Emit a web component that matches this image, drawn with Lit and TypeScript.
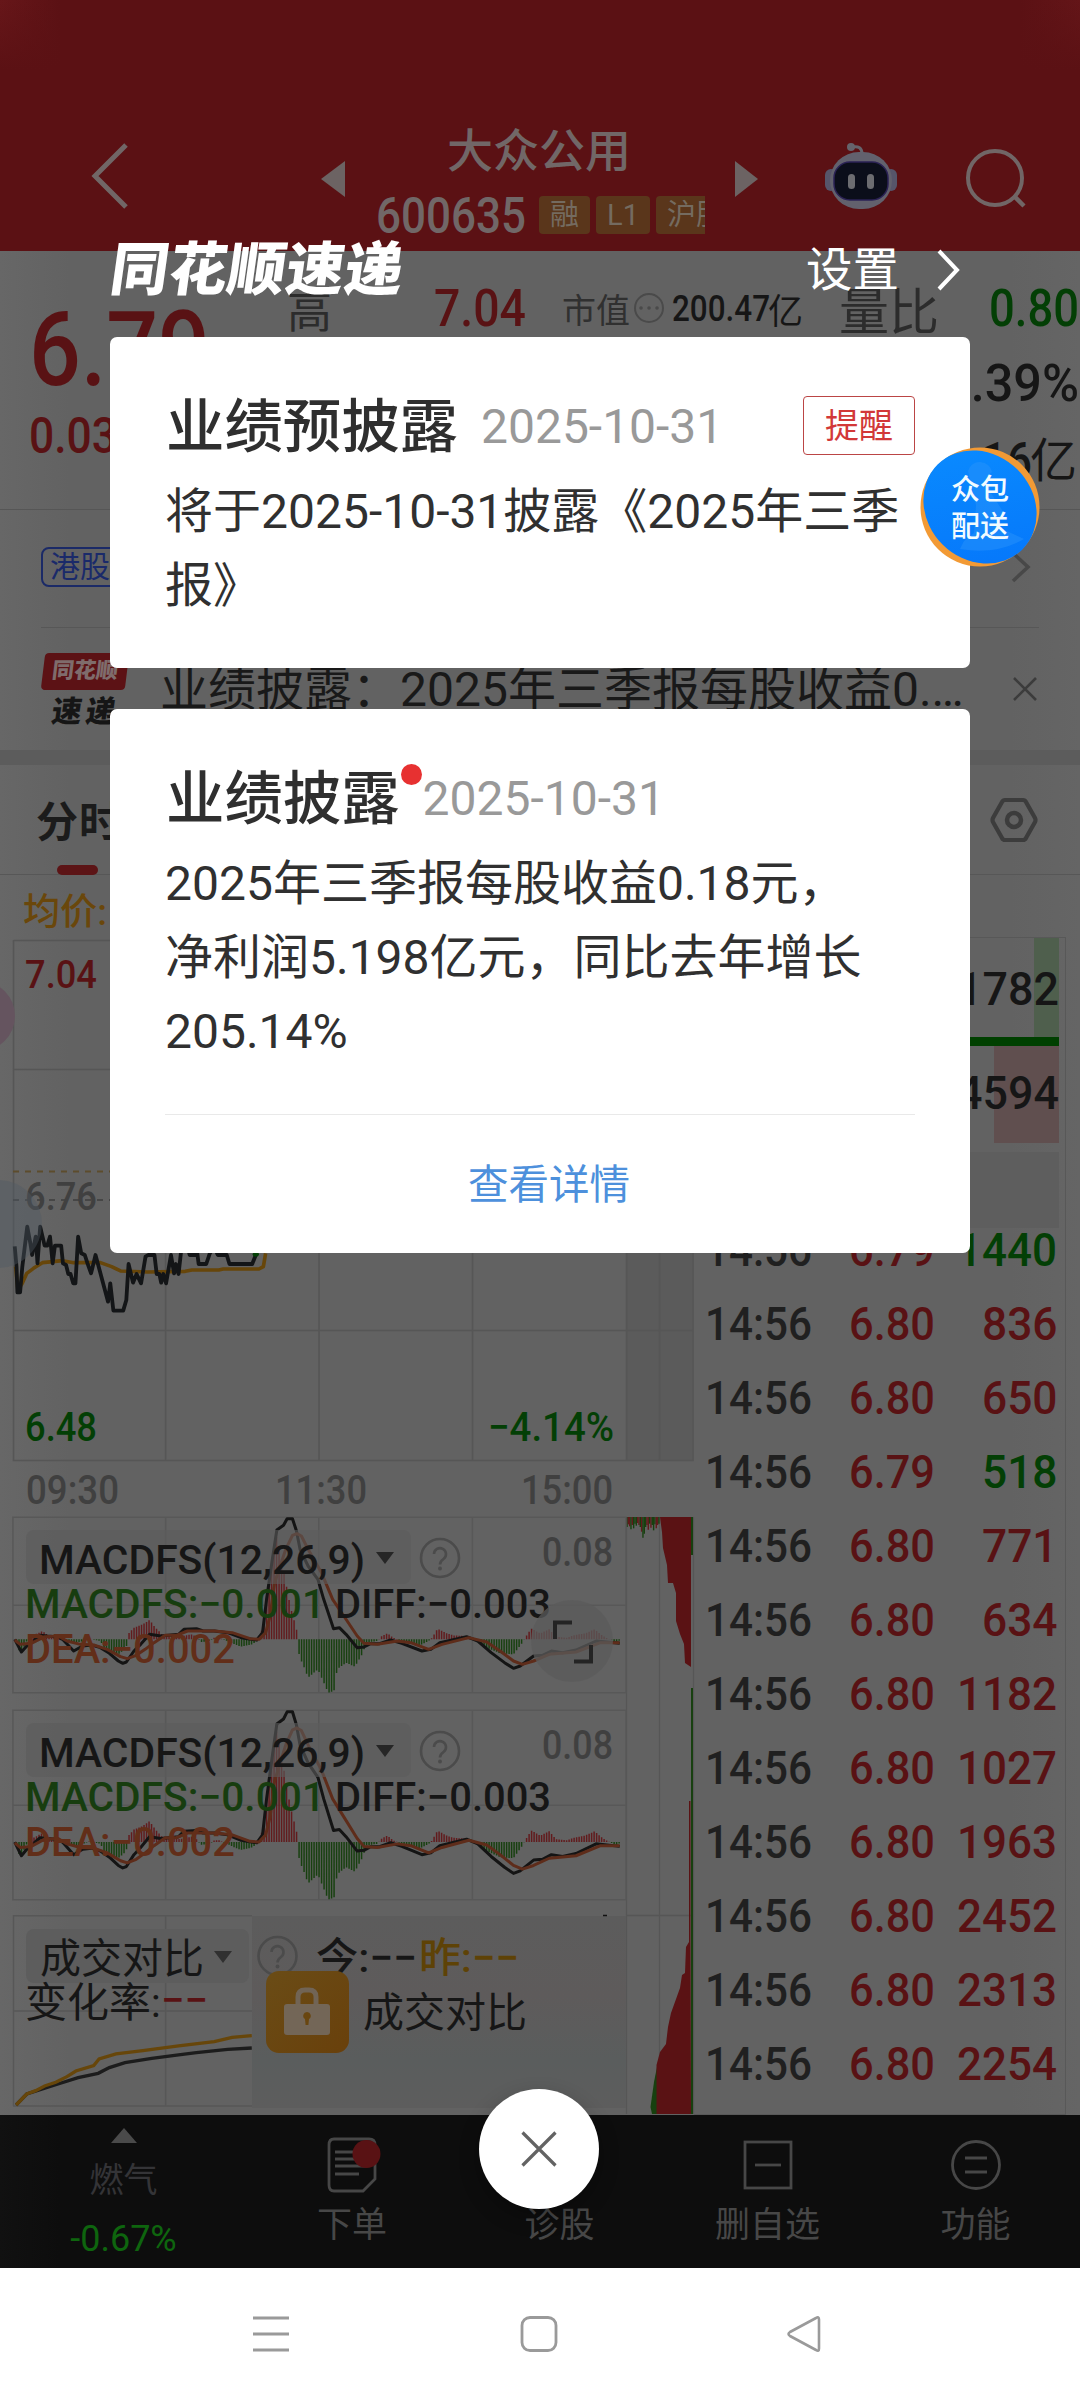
import { LitElement, html, svg, css } from "lit";
import { customElement } from "lit/decorators.js";

/** Condensed numeric label, fitted to a given width. */
const num = (text: string, width: number, size: number, fill: string, weight = 500) => html`<svg
  class="num" width=${width} height=${Math.round(size * 0.72)}>
  <text x="-2" y=${Math.round(size * 0.715)} font-size=${size} font-weight=${weight} fill=${fill}
    textLength=${width + 4} lengthAdjust="spacingAndGlyphs">${text}</text></svg>`;

const label = (x: number, y: number, width: number, size: number, fill: string, text: string, weight = 500) => svg`<text
  x=${x - 2} y=${y} font-size=${size} font-weight=${weight} fill=${fill} textLength=${width + 4}
  lengthAdjust="spacingAndGlyphs">${text}</text>`;

const RED = "#591214";
const GREEN = "#033f05";
const INK = "#161616";
const DIM = "#404040";

const TRADES: [string, string, string, boolean][] = [
  ["14:56", "6.79", "1440", false],
  ["14:56", "6.80", "836", true],
  ["14:56", "6.80", "650", true],
  ["14:56", "6.79", "518", false],
  ["14:56", "6.80", "771", true],
  ["14:56", "6.80", "634", true],
  ["14:56", "6.80", "1182", true],
  ["14:56", "6.80", "1027", true],
  ["14:56", "6.80", "1963", true],
  ["14:56", "6.80", "2452", true],
  ["14:56", "6.80", "2313", true],
  ["14:56", "6.80", "2254", true],
];

const HIST: number[][] = [
  [37, -5], [45, -45], [60, -5], [75, 12], [95, 25], [115, 5], [140, 3], [150, -10], [180, -8], [200, 2], [225, -5],
  [235, -30], [265, -45], [283, -25], [286, 15], [300, 35], [320, 45], [335, 58], [348, 35], [365, 12], [400, 8],
  [430, 15], [440, 8], [450, -8], [470, -5], [480, 5], [490, 5], [505, -3], [520, -12], [540, -22], [565, -15],
  [580, 0], [583, 10], [592, 60], [600, 150], [612, 260], [620, 310], [628, 260], [640, 170], [650, 100], [660, 50],
  [668, 10], [670, -50], [680, -80], [690, -115], [712, -90], [735, -160], [748, -155], [755, -90], [775, -70],
  [795, -82], [813, -40], [820, -10], [845, -5], [855, 10], [868, 18], [880, 5], [900, -5], [920, -12], [940, -18],
  [960, -5], [968, 5], [980, 32], [1000, 18], [1015, 12], [1040, 10], [1060, 2], [1070, -5], [1090, -25],
  [1120, -42], [1150, -45], [1170, -10], [1176, 5], [1190, 32], [1210, 18], [1230, 30], [1245, 8], [1270, 5],
  [1285, 12], [1310, 18], [1332, 30], [1345, 15], [1360, 3], [1380, -8], [1388, -3],
];

const histAt = (x: number) => {
  for (let i = 1; i < HIST.length; i++) {
    const [x0, y0] = HIST[i - 1];
    const [x1, y1] = HIST[i];
    if (x <= x1) return y0 + ((y1 - y0) * (x - x0)) / (x1 - x0);
  }
  return 0;
};

const bars = (positive: boolean) => {
  let d = "";
  for (let x = 37; x < 1388; x += 5.6) {
    const v = histAt(x);
    if (v > 0 === positive) d += `M${x.toFixed(1)} 420V${(420 - v).toFixed(1)}`;
  }
  return d;
};

const UP = bars(true);
const DOWN = bars(false);

@customElement("app-root")
export class AppRoot extends LitElement {
  static styles = css`
    :host { display: block; font-family: Roboto, "Noto Sans CJK SC", sans-serif; }
    .screen { position: relative; width: 1080px; height: 2400px; overflow: hidden; display: flex; flex-direction: column;
      background: linear-gradient(90deg, #676767, #626262 70px, #626262 1010px, #656565); color: #161616; }
    svg { display: block; flex: none; overflow: visible; }
    svg text { font-family: Roboto, "Noto Sans CJK SC", sans-serif; white-space: pre; }
    .num { flex: none; }

    .top { box-sizing: border-box; height: 251px; padding: 118px 52px 0 92px; display: flex; flex: none; align-items: flex-start;
      background: linear-gradient(180deg, #66151900 0, #5b1114 70px), linear-gradient(90deg, #671619, #5b1114 60px, #5b1114 1020px, #641518);
      background-color: #661518; }
    .back { margin-top: 26px; }
    .prev { margin: 43px 0 0 193px; }
    .name { width: 328px; margin-left: 32px; display: flex; flex-direction: column; }
    .stock { height: 62px; margin-left: 70px; font-size: 46px; font-weight: 500; line-height: 67px; color: #716767; white-space: nowrap; }
    .code { display: flex; align-items: center; height: 38px; margin-top: 16px; overflow: hidden; gap: 6px; }
    .code .num { margin-right: 9px; margin-left: 1px; }
    .badge { flex: none; height: 38px; padding: 0 11px; border-radius: 4px; background: #5a361b; color: #746b60; font-size: 29px; line-height: 38px; }
    .next { margin: 43px 0 0 30px; }
    .bot { margin: 24px 0 0 67px; }
    .find { margin: 30px 0 0 68px; }

    .quote { flex: none; height: 259px; display: flex; box-sizing: border-box; padding: 35px 3px 0 31px; border-bottom: 1px solid #565656; }
    .price { width: 256px; padding-top: 25px; display: flex; flex-direction: column; gap: 32px; }
    .stats { flex: 1; display: flex; flex-direction: column; align-items: flex-end; gap: 35px; }
    .statrow { display: flex; align-items: center; align-self: stretch; height: 44px; color: #2c2c2c; white-space: nowrap; }
    .high { font-size: 45px; width: 149px; }
    .cap { font-size: 34px; color: #303030; margin-left: 38px; width: 72px; }
    .sp { width: 10px; }
    .yi { font-size: 35px; color: #161616; }
    .ratio { font-size: 50px; margin-left: 36px; flex: 1; }
    .tri { align-self: flex-end; display: flex; align-items: center; color: #161616; font-size: 47px; line-height: 48px; }

    .concept { flex: none; display: flex; align-items: center; justify-content: space-between; box-sizing: border-box; height: 118px; margin: 0 41px; padding: 0 8px 3px 0; border-bottom: 1px solid #575757; }
    .tag { box-sizing: border-box; height: 40px; width: 200px; padding-left: 7px; border: 2px solid #1b2a67; border-radius: 8px; color: #1a2a6a; font-size: 30px; line-height: 36px; }
    .news { flex: none; height: 122px; display: flex; align-items: flex-start; padding-left: 42px; }
    .brand { width: 118px; padding-top: 25px; display: flex; flex-direction: column; }
    .brandtop { width: 84px; height: 37px; margin-left: 1px; border-radius: 4px; background: #5c1215; transform: skewX(-7deg); color: #7f6c6c; font-size: 22px; line-height: 36px; font-weight: 900; text-align: center; }
    .brandlow { font-size: 30px; font-weight: 900; line-height: 38px; margin: 3px 0 0 10px; letter-spacing: 4px; transform: skewX(-8deg); transform-origin: left; white-space: nowrap; }
    .headline { width: 853px; font-size: 48px; line-height: 72px; margin-top: 26px; white-space: nowrap; color: #191919; }
    .news .x { margin-top: 49px; }
    .band { flex: none; height: 15px; background: #5c5c5c; }
    .tabs { flex: none; height: 110px; box-sizing: border-box; border-bottom: 1px solid #575757; display: flex; justify-content: space-between; align-items: flex-start; padding: 28px 42px 0 36px; }
    .tab { font-size: 42px; line-height: 60px; font-weight: 700; letter-spacing: 1px; color: #1b1b1b; display: flex; flex-direction: column; gap: 12px; }
    .mark { width: 41px; height: 10px; border-radius: 5px; background: #5c1416; margin-left: 21px; }
    .gear { margin-top: 4px; }

    .board { flex: none; height: 1240px; display: grid; grid-template-columns: 694px 1fr; }
    .charts { display: flex; flex-direction: column; padding-top: 1px; }
    .layer { height: 0; }
    .book { margin-top: 62px; margin-right: 14px; border: 1px solid #585858; border-left: none; display: flex; flex-direction: column; }
    .ask, .bid { display: flex; justify-content: flex-end; align-items: center; margin-right: 6px; padding-right: 2px; box-sizing: border-box; }
    .ask { height: 99px; background: linear-gradient(90deg, transparent 340px, #4f5f4d 340px); }
    .gap { height: 9px; margin-right: 6px; background: #004000; }
    .bid { height: 97px; padding-bottom: 6px; background: linear-gradient(90deg, transparent 300px, #604f4f 300px); }
    .strip { height: 76px; margin: 9px 6px 0 0; background: #5e5e5e; }
    .trades { margin-top: -16px; padding-left: 13px; }
    .trade { height: 74px; display: grid; grid-template-columns: 144px 84px 120px; align-items: center; }
    .vol { display: flex; justify-content: flex-end; }

    .nav { flex: none; height: 153px; background: linear-gradient(90deg, #111, #0d0d0d 60px, #0d0d0d); display: flex; font-size: 35px; line-height: 50px; color: #474747; }
    .item { box-sizing: border-box; display: flex; flex-direction: column; align-items: center; justify-content: space-between; padding: 22px 0 17px; }
    .i1 { width: 247px; padding: 13px 0 0; color: #343437; justify-content: flex-start; }
    .i2 { width: 210px; } .i3 { width: 205px; justify-content: flex-end; } .i4 { width: 211px; } .i5 { width: 205px; }
    .pct { font-size: 36px; line-height: 40px; color: #0e650e; margin-top: 17px; }
    .gas { font-size: 34px; line-height: 44px; margin-top: 15px; }
    .sys { flex: 1; display: flex; align-items: flex-start; background: #fff; padding: 47px 0 0 252px; }
    .s2 { margin-left: 229px; } .s3 { margin-left: 229px; }

    .modal { position: absolute; left: 110px; top: 232px; width: 860px; display: flex; flex-direction: column; }
    .mhead { height: 105px; display: flex; justify-content: space-between; align-items: flex-start; color: #fff; }
    .mlogo { font-size: 58px; line-height: 77px; font-weight: 900; transform: skewX(-8deg); margin-left: 1px; letter-spacing: .5px; }
    .mset { display: flex; align-items: center; gap: 38px; font-size: 46.5px; line-height: 76px; padding-right: 9px; }
    .card { box-sizing: border-box; background: #fff; border-radius: 7px; color: #333; padding: 47px 55px 0; }
    .c1 { height: 331px; }
    .c2 { height: 544px; margin-top: 41px; }
    .chead { display: flex; align-items: center; height: 84px; }
    .ctitle { font-size: 58.4px; line-height: 84px; font-weight: 500; padding: 2px 0 0 1px; white-space: nowrap; color: #2f2f2f; }
    .date { font-size: 48px; color: #999; margin-left: 23px; flex: 1; }
    .remind { box-sizing: border-box; width: 112px; height: 59px; border: 1.5px solid #bb4545; border-radius: 4px; color: #d23838; font-size: 34px; line-height: 58px; text-align: center; margin-top: -2px; }
    .body { font-size: 48px; line-height: 74px; padding-top: 7px; color: #303030; white-space: nowrap; }
    .dot { width: 21px; height: 21px; border-radius: 50%; background: #e73131; align-self: flex-start; margin: 8px 1px 0 1px; }
    .c2 .date { margin-left: 0; }
    .rule { height: 1px; background: #e9e9e9; margin-top: 45px; }
    .link { text-align: center; font-size: 40.5px; line-height: 60px; padding: 40px 0 0 18px; color: #4d90dc; }

    .float { position: absolute; left: 920px; top: 447px; width: 120px; height: 120px; }
    .expand { position: absolute; left: 531px; top: 1600px; }
    .close { position: absolute; left: 479px; top: 2089px; width: 120px; height: 120px; border-radius: 50%; background: #fff; box-shadow: 0 8px 20px rgba(0,0,0,.28); display: flex; align-items: center; justify-content: center; }
    .blob { position: absolute; border-radius: 50%; }
    .pink { left: -55px; top: 981px; width: 70px; height: 70px; background: #65545f; }
    .blue { left: -46px; top: 1180px; width: 88px; height: 88px; background: #4f5a6466; }
  `;

  private macd(height: number, gap: number) {
    return html`<svg width="694" height=${height + gap}>
      <svg x="0" y="0" width="626" height=${height} viewBox="0 53 1402 528" preserveAspectRatio="none">
        <g fill="none" stroke="#585858" stroke-width="1.5">
          <path vector-effect="non-scaling-stroke" d="M29 54H1402V580H29ZM371 54V580M714 54V580M1058 54V580M29 318H1402" />
        </g>
        <path d=${UP} stroke="#621b1d" stroke-width="3.3" />
        <path d=${DOWN} stroke="#17400f" stroke-width="3.3" />
        <g fill="none" stroke-width="3" stroke-linejoin="round">
          <path vector-effect="non-scaling-stroke" stroke="#141414" d="M33 420L48 458 60 440 90 408 105 410 125 412 140 420 165 455 185 440 205 437 225 445 245 462 265 485 275 492 283 488 300 455 315 435 335 405 360 410 400 405 412 390 440 388 455 395 480 395 510 400 540 415 575 422 588 400 597 300 610 180 620 92 635 78 643 58 655 58 664 95 672 150 690 200 712 240 725 300 747 388 760 385 775 405 800 445 815 443 830 433 850 433 875 422 900 432 945 455 965 450 985 430 1045 412 1070 425 1100 460 1130 490 1150 507 1165 500 1195 470 1215 468 1235 455 1260 460 1290 452 1335 425 1388 432" />
          <path vector-effect="non-scaling-stroke" stroke="#5e2c1a" d="M33 422L45 435 70 432 100 412 130 410 150 425 180 435 210 437 240 450 270 472 285 478 305 468 325 450 345 430 370 408 395 408 420 395 480 395 520 400 560 418 580 420 595 400 605 350 615 250 640 150 655 108 665 103 675 110 690 150 720 220 745 300 770 350 800 410 815 432 845 435 890 425 920 430 960 450 990 435 1050 415 1090 428 1120 455 1150 485 1170 495 1195 485 1230 465 1290 458 1345 430 1388 430" />
        </g>
      </svg>
      <rect x="26" y="13" width="385" height="54" rx="8" fill="#5c5c5c" fill-opacity=".6" />
      ${label(41, 57, 322, 41, INK, "MACDFS(12,26,9)")}
      <path d="M376 35H394L385 47Z" fill="#262626" />
      ${this.help(440, 41)}
      ${label(544, 49, 67, 40, DIM, "0.08")}
      ${label(27, 101, 296, 40, "#173d0f", "MACDFS:−0.001")}
      ${label(337, 101, 212, 40, INK, "DIFF:−0.003")}
      ${label(27, 146, 206, 40, "#622e19", "DEA:−0.002")}
    </svg>`;
  }

  private help(x: number, y: number) {
    return svg`<circle cx=${x} cy=${y} r="19" fill="none" stroke="#4b4b4b" stroke-width="2.6" />
      <path d="M${x - 6} ${y - 4}a6 6 0 1 1 9.500 5c-2.500 1.800-3.500 3-3.500 5.500" fill="none" stroke="#4b4b4b" stroke-width="2.6" />
      <circle cx=${x} cy=${y + 10.5} r="1.9" fill="#4b4b4b" />`;
  }

  private intraday() {
    return html`<svg width="694" height="641">
      <rect x="626" y="64" width="67" height="520" fill="#5b5b5b" />
      ${label(25, 49, 80, 37, "#6a470b", "均价:")}
      <path d="M13.500 64.500H693M13.500 64V584.500H693V64M165.600 64V584M319 64V584M472.500 64V584M626.500 64V584M659.500 64V584M13 193.500H693M13 454.500H693" fill="none" stroke="#565656" stroke-width="1.6" />
      <path d="M13 295.500H626" stroke="#5d4c2c" stroke-width="2" stroke-dasharray="6 6" />
      <path d="M13 324H626" stroke="#3e3e3e" stroke-width="1.5" stroke-dasharray="6 6" />
      ${label(27, 112, 68, 39, RED, "7.04")}
      ${label(27, 334, 68, 39, DIM, "6.76")}
      <g transform="translate(0 324) scale(.4464 .3333)" fill="none" stroke-linejoin="round">
        <path vector-effect="non-scaling-stroke" stroke="#67460a" stroke-width="3.6" d="M35 200L40 270 50 250 60 220 75 205 95 188 140 182 165 188 225 188 250 200 270 213 330 216 415 214 430 210 490 210 500 207 580 207 590 200 595 160" />
        <path vector-effect="non-scaling-stroke" stroke="#131517" stroke-width="3.8" d="M33 139L37 200 39 277 45 277 50 200 61 80 68 130 72 165 80 110 84 190 90 80 100 137 106 137 112 110 118 190 123 137 137 137 141 190 148 195 153 222 158 222 164 250 169 250 175 110 182 160 190 165 196 190 204 220 214 165 242 305 247 250 254 332 276 332 283 300 288 192 298 248 306 222 316 250 326 170 332 165 346 165 351 222 357 222 361 248 366 222 372 250 383 165 390 220 394 192 400 222 406 150 420 140 425 165 438 165 441 150 445 192 462 192 470 160 480 140 488 165 508 165 514 192 565 192 573 165" />
        <circle cx="573" cy="163" r="7" fill="#033f05" />
      </g>
      ${label(27, 565, 68, 40, GREEN, "6.48")}
      ${label(490, 565, 122, 40, GREEN, "−4.14%")}
      ${label(28, 628, 89, 40, DIM, "09:30")}
      ${label(277, 628, 88, 40, DIM, "11:30")}
      ${label(523, 628, 88, 40, DIM, "15:00")}
    </svg>`;
  }

  private compare() {
    return html`<svg width="694" height="200">
      <defs>
        <linearGradient id="lk" x1="0" y1="0" x2="1" y2="1"><stop offset="0" stop-color="#6a4c16" /><stop offset="1" stop-color="#69400b" /></linearGradient>
        <linearGradient id="bg" x1="0" y1="0" x2="0" y2="1"><stop offset="0" stop-color="#5c5c5c" /><stop offset=".42" stop-color="#5e5b5b" /><stop offset=".75" stop-color="#5a5d5d" /><stop offset="1" stop-color="#5d5d5d" /></linearGradient>
      </defs>
      <path d="M13.500 191V.800H252M13 191H252M165.600 0V191M13 96H252" fill="none" stroke="#575757" stroke-width="1.5" />
      <g transform="translate(0 -25) scale(.4464 .3333)" fill="none">
        <path vector-effect="non-scaling-stroke" stroke="#1c1c1c" stroke-width="3.3" d="M36 645L60 612 95 597 130 582 175 563 220 550 245 533 280 518 340 505 400 495 440 488 510 478 564 474" />
        <path vector-effect="non-scaling-stroke" stroke="#67460a" stroke-width="3.3" d="M36 645L60 612 80 602 100 588 125 577 150 560 170 543 210 527 222 507 260 492 320 482 400 468 480 455 520 442 564 437" />
      </g>
      <rect x="252" y="1" width="374" height="192" fill="url(#bg)" />
      <path d="M603 .500h4" stroke="#111" stroke-width="1.500" />
      <rect x="26" y="14" width="223" height="54" rx="8" fill="#5d5d5d" />
      ${label(42, 58, 160, 41, INK, "成交对比", 400)}
      <path d="M214 36H232L223 48Z" fill="#303030" />
      ${this.help(277.5, 41)}
      ${label(318, 57, 97, 41, INK, "今:−−")}
      ${label(421, 57, 96, 41, "#5e4206", "昨:−−")}
      ${label(27, 102, 132, 41, INK, "变化率:", 400)}
      ${label(163, 99, 43, 40, RED, "−−")}
      <rect x="266" y="56" width="83" height="82" rx="13" fill="url(#lk)" />
      <path d="M298 91V82q0-7 7-7h4q7 0 7 7V91" fill="none" stroke="#716455" stroke-width="5" />
      <rect x="284" y="89" width="46" height="31" rx="3" fill="#736657" />
      <path d="M307 97a3.800 3.800 0 0 1 2 7l-.6 6h-2.800l-.6-6a3.800 3.800 0 0 1 2-7Z" fill="#694610" />
      ${label(365, 112, 160, 41, INK, "成交对比", 400)}
    </svg>`;
  }

  private depth() {
    const tops = [30, 22, 28, 37, 24, 34, 20, 26, 18, 24, 30, 44, 62, 50, 30, 24, 38, 20, 32, 24, 40, 22, 34, 24, 20];
    return html`<svg width="694" height="597">
      <path d="M659.500 0V597M626.500 0V597M693.500 0V597M626 398.500H693" stroke="#565656" stroke-width="1.3" />
      <g stroke-width="1.400">${tops.map((t, i) => svg`<path d="M${627 + i * 1.33} 0v${t / 3}" stroke=${i % 7 === 1 || i % 7 === 2 || i % 7 === 4 ? "#611a1b" : "#17400f"} />`)}</g>
      <path fill="#5a1214" d="M660 0L662 15 663 31 667 48 668 66 673 66 676 76 676 104 680 117 684 127 685 146 691 150V0Z" />
      <path fill="#17400f" d="M691 0h2V38h-2ZM691 171h2V597h-2Z" />
      <path fill="#17400f" d="M657 597L655 597 652 597 650.500 590 654 565 657 550Z" />
      <path fill="#5a1214" d="M689 284h1.500V425L691 597H656.500V548L660 535 666 527 668 510 671 496 680 471 682 458 685 456 686 430 689 425Z" />
    </svg>`;
  }

  render() {
    return html`<div class="screen">
      <header class="top">
        <svg class="back" width="36" height="64"><path d="M34 1L3 32 34 63" fill="none" stroke="#716666" stroke-width="5" /></svg>
        <svg class="prev" width="24" height="36"><path d="M24 0V36L0 18Z" fill="#6c6363" /></svg>
        <div class="name">
          <div class="stock">大众公用</div>
          <div class="code">${num("600635", 146, 50, "#716767")}<span class="badge">融</span><span class="badge">L1</span><span class="badge">沪股</span></div>
        </div>
        <svg class="next" width="23" height="36"><path d="M0 0V36L23 18Z" fill="#6c6363" /></svg>
        <svg class="bot" width="73" height="68">
          <path d="M27 5q10-2 10 7" fill="none" stroke="#65646c" stroke-width="3" /><circle cx="26" cy="5" r="4" fill="#65646c" />
          <rect x="0" y="27" width="12" height="22" rx="6" fill="#56556a" /><rect x="60" y="27" width="12" height="22" rx="6" fill="#56556a" />
          <rect x="5" y="10" width="62" height="57" rx="29" fill="#62616d" />
          <rect x="9" y="20" width="54" height="38" rx="16" fill="#0b0e1a" stroke="#2b2255" stroke-width="1.500" />
          <rect x="23" y="32" width="7" height="15" rx="3.500" fill="#6c6c70" /><rect x="42" y="32" width="7" height="15" rx="3.500" fill="#6c6c70" />
        </svg>
        <svg class="find" width="60" height="60"><circle cx="29" cy="30" r="27" fill="none" stroke="#716666" stroke-width="4" /><path d="M48 48L58 58" stroke="#716666" stroke-width="4.500" /></svg>
      </header>

      <section class="quote">
        <div class="price">${num("6.79", 177, 103, RED)}${num("0.03", 84, 50, RED)}</div>
        <div class="stats">
          <div class="statrow">
            <span class="high">高</span>${num("7.04", 88, 51, RED)}
            <span class="cap">市值</span>
            <svg width="30" height="30"><circle cx="15" cy="15" r="14" fill="none" stroke="#4a4a4a" stroke-width="2" /><path d="M7 15h.1M15 15h.1M23 15h.1" stroke="#4a4a4a" stroke-width="3.500" stroke-linecap="round" /></svg>
            <span class="sp"></span>${num("200.47", 94, 36, INK)}<span class="yi">亿</span>
            <span class="ratio">量比</span>${num("0.80", 86, 51, GREEN)}
          </div>
          ${num("0.39%", 133, 51, INK)}
          <div class="tri">${num("0.16", 84, 51, INK)}亿</div>
        </div>
      </section>

      <section class="concept">
        <span class="tag">港股通</span>
        <svg width="20" height="30"><path d="M2 1L17 15 2 29" fill="none" stroke="#484848" stroke-width="3.500" /></svg>
      </section>
      <section class="news">
        <div class="brand">
          <div class="brandtop">同花顺</div><div class="brandlow">速递</div>
        </div>
        <div class="headline">业绩披露：2025年三季报每股收益0.…</div>
        <svg class="x" width="24" height="24"><path d="M1 1L23 23M23 1L1 23" stroke="#3c3c3c" stroke-width="2.600" /></svg>
      </section>
      <div class="band"></div>
      <section class="tabs">
        <div class="tab"><span>分时</span><span class="mark"></span></div>
        <svg class="gear" width="48" height="46"><path d="M15 3H33Q35 3 36 5L45 21Q46 23 45 25L36 41Q35 43 33 43H15Q13 43 12 41L3 25Q2 23 3 21L12 5Q13 3 15 3Z" fill="none" stroke="#3c3c3c" stroke-width="4.200" /><circle cx="24" cy="23" r="7" fill="none" stroke="#3c3c3c" stroke-width="4.500" /></svg>
      </section>

      <main class="board">
        <div class="charts">
          ${this.intraday()}
          <div class="layer">${this.depth()}</div>
          ${this.macd(176, 17)}
          ${this.macd(190, 15)}
          ${this.compare()}
        </div>
        <div class="book">
          <div class="ask">${num("1782", 98, 47, INK)}</div>
          <div class="gap"></div>
          <div class="bid">${num("4594", 98, 47, INK)}</div>
          <div class="strip"></div>
          <div class="trades">
            ${TRADES.map(([t, p, v, up]) => html`<div class="trade">
              ${num(t, 103, 47, "#202020")}${num(p, 82, 47, RED)}<span class="vol">${num(v, v.length * 24.5 - 2, 47, up ? RED : GREEN)}</span>
            </div>`)}
          </div>
        </div>
      </main>

      <nav class="nav">
        <div class="item i1"><svg width="26" height="15"><path d="M0 15L13 0 26 15Z" fill="#4a4a4a" /></svg><span class="gas">燃气</span><span class="pct">-0.67%</span></div>
        <div class="item i2"><svg width="50" height="56"><path d="M7 2H42Q48 2 48 8V42L36 54H7Q2 54 2 48V8Q2 2 7 2Z" fill="none" stroke="#474747" stroke-width="2.800" /><path d="M8 15H30M8 22H36M8 29H39M8 37H32" stroke="#474747" stroke-width="2.800" /><circle cx="39.500" cy="17" r="14" fill="#591214" /></svg><span>下单</span></div>
        <div class="item i3"><span>诊股</span></div>
        <div class="item i4"><svg width="50" height="56"><rect x="2" y="5" width="46" height="46" fill="none" stroke="#474747" stroke-width="2.800" /><path d="M12 28H38" stroke="#474747" stroke-width="2.800" /></svg><span>删自选</span></div>
        <div class="item i5"><svg width="50" height="56"><circle cx="25" cy="28" r="23.500" fill="none" stroke="#474747" stroke-width="2.800" /><path d="M14 21H36M14 35H36" stroke="#474747" stroke-width="2.800" /></svg><span>功能</span></div>
      </nav>
      <footer class="sys">
        <svg width="38" height="38"><path d="M1 3H37M1 19H37M1 35H37" stroke="#9a9a9a" stroke-width="3" /></svg>
        <svg class="s2" width="38" height="38"><rect x="3" y="2.500" width="34" height="33" rx="8" fill="none" stroke="#9a9a9a" stroke-width="2.800" /></svg>
        <svg class="s3" width="38" height="38"><path d="M33 4.500Q33 1 30 3L4 17Q1 19 4 21L30 35Q33 37 33 33.500Z" fill="none" stroke="#9a9a9a" stroke-width="2.600" stroke-linejoin="round" /></svg>
      </footer>

      <div class="blob pink"></div>
      <div class="blob blue"></div>
      <svg class="expand" width="82" height="82"><circle cx="41" cy="41" r="41" fill="#5b5b5b" fill-opacity=".75" /><path d="M41 22.500H24V39M43 61.500H60V45" fill="none" stroke="#242424" stroke-width="4" /></svg>

      <div class="modal">
        <div class="mhead">
          <div class="mlogo">同花顺速递</div>
          <div class="mset"><span>设置</span><svg width="24" height="40"><path d="M2 1L20 20 2 39" fill="none" stroke="#fff" stroke-width="4" /></svg></div>
        </div>
        <article class="card c1">
          <div class="chead"><span class="ctitle">业绩预披露</span><span class="date">2025-10-31</span><span class="remind">提醒</span></div>
          <div class="body">将于2025-10-31披露《2025年三季<br />报》</div>
        </article>
        <article class="card c2">
          <div class="chead"><span class="ctitle">业绩披露</span><span class="dot"></span><span class="date">2025-10-31</span></div>
          <div class="body">2025年三季报每股收益0.18元，<br />净利润5.198亿元，同比去年增长<br />205.14%</div>
          <div class="rule"></div>
          <div class="link">查看详情</div>
        </article>
      </div>

      <svg class="float" viewBox="0 0 120 120">
        <defs><linearGradient id="fb" x1="0" y1="0" x2="1" y2=".6"><stop offset="0" stop-color="#0a8cff" /><stop offset="1" stop-color="#0679fb" /></linearGradient></defs>
        <circle cx="60" cy="60" r="59.500" fill="#f29a35" />
        <ellipse cx="60" cy="60" rx="60" ry="53" transform="rotate(45 60 60)" fill="url(#fb)" />
        <path d="M48 24q3-9 12-9 10 1 12 10l-4 3 3 18 13 20-10 12 30 14q-28 16-64 10l4-8 10-8 2-28Z" fill="#2c94fb" fill-opacity=".45" />
        <text x="31" y="53" font-size="29" font-weight="500" fill="#f2fbff">众包</text>
        <text x="31" y="90" font-size="29" font-weight="500" fill="#f2fbff">配送</text>
      </svg>
      <div class="close"><svg width="36" height="36"><path d="M1.500 1.500L34.500 34.500M34.500 1.500L1.500 34.500" stroke="#636363" stroke-width="3.200" /></svg></div>
    </div>`;
  }
}
